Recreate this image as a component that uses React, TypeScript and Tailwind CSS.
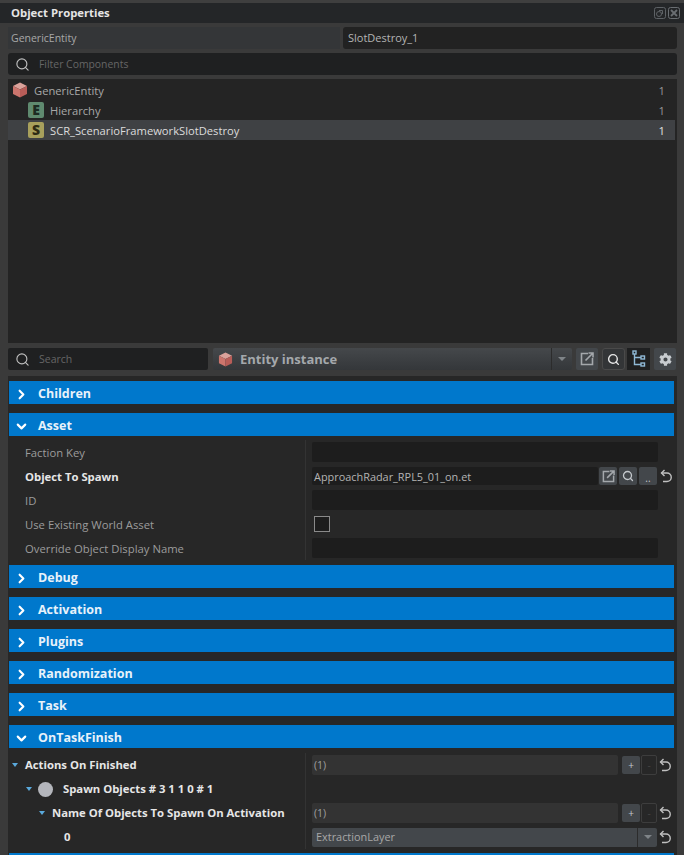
import { ChevronDown, ChevronRight, Search } from 'lucide-react';
import { FaCog } from 'react-icons/fa';

const font = "font-['Open_Sans','Noto_Sans',sans-serif]";

const Cube = ({ size = 16 }: { size?: number }) => (
  <svg width={size} height={size} viewBox="0 0 16 16">
    <path d="M8 0.5 15 4 8 7.5 1 4Z" fill="#dba29b" />
    <path d="M1 4 8 7.5V15.5L1 12Z" fill="#cc756d" />
    <path d="M15 4 8 7.5V15.5L15 12Z" fill="#b85d58" />
  </svg>
);

const Tree = () => (
  <svg width="14" height="18" viewBox="0 0 14 18" fill="none" stroke="#8fb9d6" strokeWidth="1.4">
    <rect x="1" y="1" width="3" height="3" />
    <rect x="9" y="6" width="3.5" height="3" />
    <rect x="9" y="13" width="3.5" height="3" />
    <path d="M2.5 4V14.5H9M2.5 7.5H9" />
  </svg>
);

const OpenIcon = ({ size = 14 }: { size?: number }) => (
  <svg width={size} height={size} viewBox="0 0 14 14" fill="none" stroke="#a4a8ac" strokeWidth="1.6">
    <path d="M8 1.5H1.5V12.5H12.5V6" />
    <path d="M5.5 8.5 12.5 1.5M8.5 1H13V5.5" />
  </svg>
);

const Undo = () => (
  <svg width="12" height="14" viewBox="0 0 12 14" fill="none" stroke="#c0c0c0" strokeWidth="1.4" className="shrink-0">
    <path d="M4.5 1 1.5 4 4.5 7" />
    <path d="M1.5 4H7A3.7 3.7 0 0 1 7 12.5H3" />
  </svg>
);

const Section = ({ title, open }: { title: string; open?: boolean }) => (
  <div className="h-[23px] bg-[#0078cc] flex items-center pt-[4px] mb-[9px] text-white">
    <div className="w-[24px] flex justify-center">
      {open ? <ChevronDown size={15} strokeWidth={3.4} /> : <ChevronRight size={15} strokeWidth={3.4} />}
    </div>
    <span className="ml-[5px] text-[12.5px] font-bold text-[#e8f2fa]">{title}</span>
  </div>
);

const Btn = ({ children, w = 18 }: { children: React.ReactNode; w?: number }) => (
  <div style={{ width: w }} className="h-[18px] bg-[#43474b] rounded-[2px] flex items-center justify-center text-[#c4c8cc] shrink-0">
    {children}
  </div>
);

const Row = ({ label, bold, children }: { label: string; bold?: boolean; children: React.ReactNode }) => (
  <div className="h-6 flex items-center">
    <div className={`w-[296px] pl-4 mt-[2px] text-[11.3px] ${bold ? 'font-bold text-[#e6e6e6]' : 'text-[#9c9c9c]'}`}>{label}</div>
    <div className="w-px h-full bg-[#333333]" />
    <div className="flex-1 pl-[6px] flex items-center min-w-0">{children}</div>
  </div>
);

const EmptyField = () => <div className="w-[346px] h-[20px] bg-[#1d1d1d] rounded-[2px]" />;

const ListControls = () => (
  <div className="flex items-center gap-[1px] ml-auto pr-[3px]">
    <div className="w-[18px] h-[18px] bg-[#43474b] rounded-[2px] text-[#c4c8cc] text-[10px] leading-[18px] text-center">+</div>
    <div className="w-[16px] h-[20px] border border-[#3d3d3d] rounded-[2px] text-[#444444] text-[10px] leading-[18px] text-center">-</div>
    <div className="ml-[1px]"><Undo /></div>
  </div>
);

const CountField = () => (
  <div className="w-[306px] h-[20px] bg-[#333333] text-[#a0a0a0] text-[10.5px] leading-[20px] pl-[2px] rounded-[2px]">(1)</div>
);

const Arrow = () => <div className="w-0 h-0 border-x-[4px] border-x-transparent border-t-[4px] border-t-[#7f8488]" />;
const TreeArrow = () => <span className="w-0 h-0 border-x-[3px] border-x-transparent border-t-[4px] border-t-[#5aa9dc]" />;

const listText = 'text-[11.2px] mt-[2px]';

export default function App() {
  return (
    <div className={`w-[684px] h-[855px] overflow-hidden bg-[#3a3a3a] text-[#b8b8b8] ${font}`}>
      <div className="h-[3px] bg-[#3f3f3f]" />
      <div className="h-[20px] bg-[#242628] flex items-center justify-between pl-[11px] pr-[4px]">
        <span className="text-[11.3px] font-bold text-[#e4e4e4]">Object Properties</span>
        <div className="flex gap-[2px]">
          <svg width="12" height="12" viewBox="0 0 12 12" fill="none" stroke="#5e6266" strokeWidth="1">
            <rect x="0.5" y="0.5" width="11" height="11" rx="2" />
            <circle cx="5" cy="7" r="2.5" />
            <path d="M5 3.5H8.5V7" />
          </svg>
          <svg width="12" height="12" viewBox="0 0 12 12" fill="none" stroke="#6a6e72" strokeWidth="1">
            <rect x="0.5" y="0.5" width="11" height="11" rx="2" />
            <path d="M3 3 9 9M9 3 3 9" strokeWidth="1.8" />
          </svg>
        </div>
      </div>

      <div className="pl-2 pr-[7px] pt-[4px]">
        <div className="flex gap-[3px] h-[22px]">
          <div className="w-[332px] bg-[#343638] text-[10.5px] leading-[23px] pl-[3px] text-[#a8a8a8]">GenericEntity</div>
          <div className="flex-1 bg-[#222222] rounded-[3px] text-[11px] leading-[21px] pl-[5px] text-[#b4b4b4]">SlotDestroy_1</div>
        </div>
        <div className="mt-[4px] h-[22px] bg-[#1f2021] rounded-[3px] flex items-center pl-[7px] gap-[9px]">
          <Search size={15} strokeWidth={1.8} className="text-[#c0c0c0]" />
          <span className="text-[10.4px] mt-[1px] text-[#666666]">Filter Components</span>
        </div>

        <div className="mt-[4px] h-[264px] bg-[#242424] pt-[1px]">
          <div className="h-5 flex items-center pl-[4px] pr-[12px]">
            <Cube />
            <span className={`${listText} ml-[6px] text-[#a8a8a8]`}>GenericEntity</span>
            <span className={`${listText} ml-auto text-[#999999]`}>1</span>
          </div>
          <div className="h-5 flex items-center pl-[20px] pr-[12px]">
            <div className="w-4 h-4 bg-[#5f8a6f] rounded-[2px] text-[#1c2b22] text-[14px] font-extrabold leading-4 text-center">E</div>
            <span className={`${listText} ml-[6px] text-[#a8a8a8]`}>Hierarchy</span>
            <span className={`${listText} ml-auto text-[#999999]`}>1</span>
          </div>
          <div className="h-5 flex items-center pl-[20px] pr-[10px] bg-[#3f4144] mr-[2px]">
            <div className="w-4 h-4 bg-[#a8a05c] rounded-[2px] text-[#2e2b14] text-[14px] font-extrabold leading-4 text-center">S</div>
            <span className={`${listText} ml-[6px] text-[#dcdcdc]`}>SCR_ScenarioFrameworkSlotDestroy</span>
            <span className={`${listText} ml-auto text-[#e0e0e0]`}>1</span>
          </div>
        </div>

        <div className="mt-[5px] h-[22px] flex items-center">
          <div className="w-[200px] h-[22px] bg-[#1f2021] rounded-[2px] flex items-center pl-[7px] gap-[9px]">
            <Search size={15} strokeWidth={1.8} className="text-[#c0c0c0]" />
            <span className="text-[10.5px] mt-[1px] text-[#666666]">Search</span>
          </div>
          <div className="ml-[5px] w-[359px] h-[22px] bg-linear-to-b from-[#45484b] to-[#34373a] rounded-[2px] flex items-center pl-[5px]">
            <Cube size={15} />
            <span className="text-[13px] mt-[1px] font-bold text-[#a4a8ac] ml-[7px]">Entity instance</span>
            <div className="ml-auto w-[21px] h-full border-l border-[#2c2c2c] flex items-center justify-center">
              <Arrow />
            </div>
          </div>
          <div className="ml-[4px] flex items-center gap-[4px]">
            <div className="w-[22px] h-[22px] bg-[#43474b] rounded-[2px] flex items-center justify-center"><OpenIcon /></div>
            <div className="w-[23px] h-[22px] bg-[#333537] border border-[#4a4a4a] rounded-[3px] flex items-center justify-center">
              <Search size={13} strokeWidth={2.6} className="text-[#e8e8e8]" />
            </div>
            <div className="w-[23px] h-[22px] bg-[#1f2021] -ml-[2px] flex items-center justify-center"><Tree /></div>
            <div className="w-[22px] h-[22px] bg-[#43474b] rounded-[2px] flex items-center justify-center">
              <FaCog size={13} className="text-[#c8ccd0]" />
            </div>
          </div>
        </div>

        <div className="mt-[6px] bg-[#272727] pl-[1px] pr-[3px] pt-[5px] h-[479px]">
          <Section title="Children" />
          <Section title="Asset" open />
          <div className="-mt-[5px] mb-[5px]">
            <Row label="Faction Key"><EmptyField /></Row>
            <Row label="Object To Spawn" bold>
              <div className="w-[286px] h-[18px] bg-[#1d1d1d] text-[10.9px] leading-[19px] pl-[2px] text-[#b4b4b4] rounded-[2px]">ApproachRadar_RPL5_01_on.et</div>
              <div className="flex items-center gap-[2px] ml-[1px]">
                <Btn><OpenIcon size={13} /></Btn>
                <Btn><Search size={12} strokeWidth={2.6} /></Btn>
                <div className="w-[18px] h-[18px] bg-[#43474b] rounded-[2px] flex items-end justify-center text-[#c4c8cc] text-[10px] leading-[14px] shrink-0">..</div>
                <div className="ml-[1px]"><Undo /></div>
              </div>
            </Row>
            <Row label="ID"><EmptyField /></Row>
            <Row label="Use Existing World Asset">
              <div className="w-4 h-4 bg-[#1d1d1d] border border-[#8a8a8a] ml-[2px]" />
            </Row>
            <Row label="Override Object Display Name"><EmptyField /></Row>
          </div>
          <Section title="Debug" />
          <Section title="Activation" />
          <Section title="Plugins" />
          <Section title="Randomization" />
          <Section title="Task" />
          <Section title="OnTaskFinish" open />
          <div className="-mt-[4px]">
            <div className="h-6 flex items-center">
              <div className="w-[296px] pl-[3px] flex items-center gap-[7px] text-[11.3px] font-bold text-[#e6e6e6]">
                <TreeArrow />
                Actions On Finished
              </div>
              <div className="w-px h-full bg-[#333333]" />
              <div className="flex-1 pl-[6px] flex items-center"><CountField /><ListControls /></div>
            </div>
            <div className="h-6 flex items-center">
              <div className="w-[296px] pl-[17px] flex items-center text-[11.3px] font-bold text-[#e6e6e6]">
                <TreeArrow />
                <span className="w-[15px] h-[15px] rounded-full bg-[#b4b6bc] ml-[6px] mr-[10px]" />
                Spawn Objects # 3 1 1 0 # 1
              </div>
              <div className="w-px h-full bg-[#333333]" />
            </div>
            <div className="h-6 flex items-center">
              <div className="w-[296px] pl-[30px] flex items-center gap-[7px] text-[11.3px] font-bold text-[#e6e6e6]">
                <TreeArrow />
                Name Of Objects To Spawn On Activation
              </div>
              <div className="w-px h-full bg-[#333333]" />
              <div className="flex-1 pl-[6px] flex items-center"><CountField /><ListControls /></div>
            </div>
            <div className="h-6 flex items-center">
              <div className="w-[296px] pl-[55px] text-[11.3px] font-bold text-[#e6e6e6]">0</div>
              <div className="w-px h-full bg-[#333333]" />
              <div className="flex-1 pl-[6px] flex items-center">
                <div className="w-[345px] h-[19px] bg-[#43474b] rounded-[2px] flex items-center pl-[4px] text-[10.9px] text-[#a8a8a8]">
                  ExtractionLayer
                  <div className="ml-auto w-[20px] h-full border-l border-[#2c2c2c] flex items-center justify-center">
                    <Arrow />
                  </div>
                </div>
                <div className="ml-auto pr-[3px]"><Undo /></div>
              </div>
            </div>
            <div className="h-[3px] bg-[#0078cc] mt-[4px]" />
          </div>
        </div>
      </div>
    </div>
  );
}
